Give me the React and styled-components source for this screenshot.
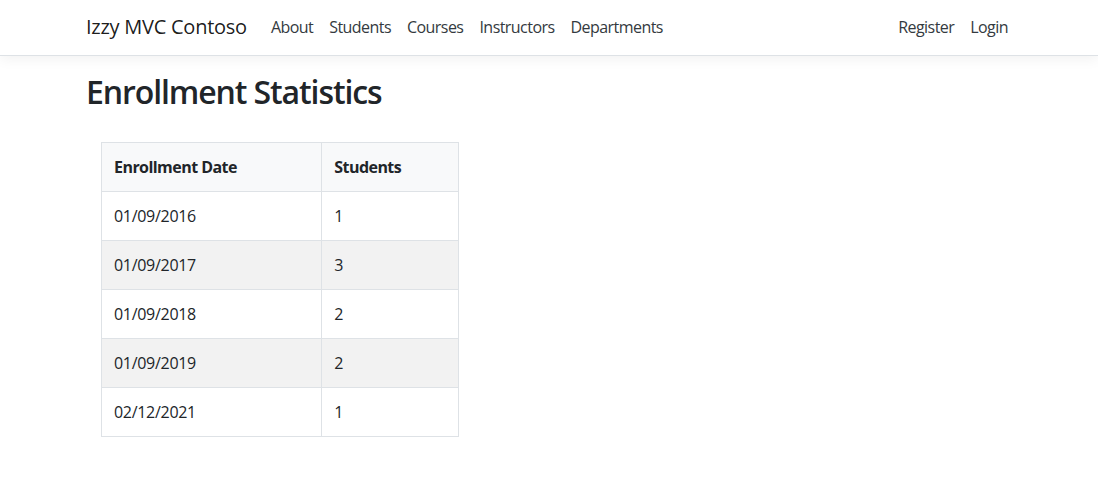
import React from "react";
import styled, { createGlobalStyle } from "styled-components";

const Global = createGlobalStyle`
  * { box-sizing: border-box; }
  html, body { margin: 0; padding: 0; background: #fff; }
  body {
    font-family: "Segoe UI", "Open Sans", "Noto Sans", sans-serif;
    font-size: 16px;
    line-height: 1.5;
    color: #212529;
  }
`;

const Navbar = styled.header`
  background: #fff;
  border-bottom: 1px solid #dee2e6;
  box-shadow: 0 4px 12px rgba(0, 0, 0, 0.05);
  margin-bottom: 17px;
`;

const NavInner = styled.nav`
  max-width: 960px;
  margin: 0 auto;
  padding: 7px 13px 8px 17px;
  display: flex;
  align-items: center;
`;

const Brand = styled.a`
  font-size: 20px;
  line-height: 30px;
  padding: 5px 0;
  margin-right: 16px;
  letter-spacing: -0.25px;
  color: rgba(0, 0, 0, 0.9);
  text-decoration: none;
  white-space: nowrap;
`;

const NavList = styled.div`
  display: flex;
  flex: 1;
  align-items: center;
`;

const Spacer = styled.div`
  flex: 1;
`;

const NavLink = styled.a`
  padding: 8px 8px;
  line-height: 24px;
  letter-spacing: -0.55px;
  color: #343a40;
  text-decoration: none;
  white-space: nowrap;
`;

const Main = styled.main`
  max-width: 960px;
  margin: 0 auto;
  padding: 0 13px 16px 17px;
`;

const Title = styled.h2`
  font-size: 32px;
  font-weight: 600;
  line-height: 1.2;
  letter-spacing: -1.1px;
  margin: 0 0 31px;
`;

const Table = styled.table`
  border-collapse: collapse;
  margin-left: 15px;
  width: 358px;
`;

const Th = styled.th`
  text-align: left;
  font-weight: 700;
  letter-spacing: -0.55px;
  padding: 12px;
  border: 1px solid #dee2e6;
  background: #f8f9fa;
  width: ${(p) => p.$w}px;
`;

const Tr = styled.tr`
  background: ${(p) => (p.$striped ? "#f2f2f2" : "#fff")};
`;

const Td = styled.td`
  padding: 12px;
  letter-spacing: -0.3px;
  border: 1px solid #dee2e6;
`;

const rows = [
  ["01/09/2016", 1],
  ["01/09/2017", 3],
  ["01/09/2018", 2],
  ["01/09/2019", 2],
  ["02/12/2021", 1],
];

export default function App() {
  return (
    <>
      <Global />
      <Navbar>
        <NavInner>
          <Brand href="#">Izzy MVC Contoso</Brand>
          <NavList>
            <NavLink href="#">About</NavLink>
            <NavLink href="#">Students</NavLink>
            <NavLink href="#">Courses</NavLink>
            <NavLink href="#">Instructors</NavLink>
            <NavLink href="#">Departments</NavLink>
            <Spacer />
            <NavLink href="#">Register</NavLink>
            <NavLink href="#">Login</NavLink>
          </NavList>
        </NavInner>
      </Navbar>
      <Main>
        <Title>Enrollment Statistics</Title>
        <Table>
          <thead>
            <tr>
              <Th $w={221}>Enrollment Date</Th>
              <Th $w={137}>Students</Th>
            </tr>
          </thead>
          <tbody>
            {rows.map(([d, n], i) => (
              <Tr key={d} $striped={i % 2 === 1}>
                <Td>{d}</Td>
                <Td>{n}</Td>
              </Tr>
            ))}
          </tbody>
        </Table>
      </Main>
    </>
  );
}
